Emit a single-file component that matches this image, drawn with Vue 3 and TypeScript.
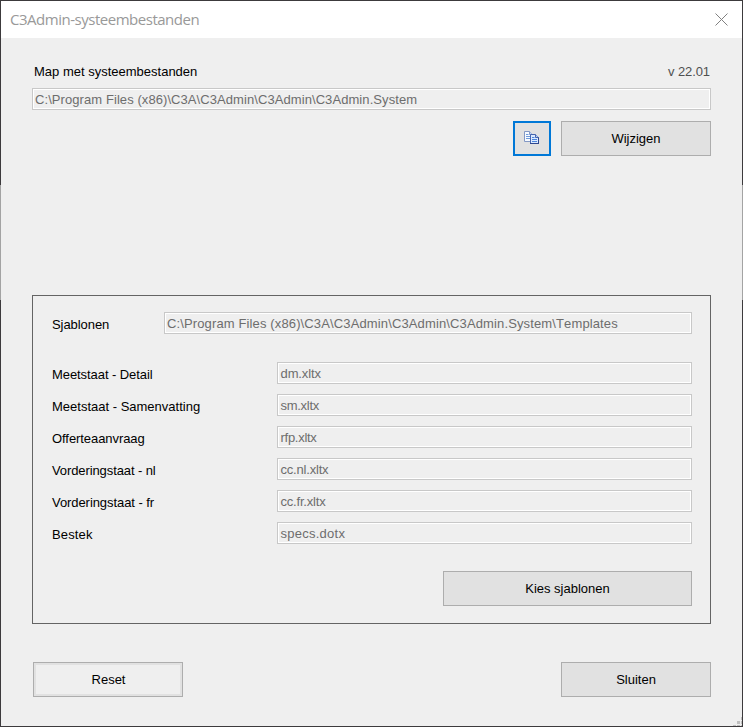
<script setup lang="ts">
interface TemplateRow {
  label: string
  file: string
  labelClass: string
  fileClass: string
}

const rows: TemplateRow[] = [
  { label: 'Meetstaat - Detail', file: 'dm.xltx', labelClass: 'l-detail', fileClass: 'f-dm' },
  { label: 'Meetstaat - Samenvatting', file: 'sm.xltx', labelClass: 'l-summary', fileClass: 'f-sm' },
  { label: 'Offerteaanvraag', file: 'rfp.xltx', labelClass: 'l-offer', fileClass: 'f-rfp' },
  { label: 'Vorderingstaat - nl', file: 'cc.nl.xltx', labelClass: 'l-nl', fileClass: 'f-nl' },
  { label: 'Vorderingstaat - fr', file: 'cc.fr.xltx', labelClass: 'l-fr', fileClass: 'f-fr' },
  { label: 'Bestek', file: 'specs.dotx', labelClass: 'l-spec', fileClass: 'f-spec' },
]
</script>

<template>
  <div class="frame">
    <div class="window">
      <header class="titlebar">
        <span class="title">C3Admin-systeembestanden</span>
        <svg class="close" width="13" height="13" viewBox="0 0 13 13">
          <path d="M0.5 0.5L12.5 12.5M12.5 0.5L0.5 12.5" stroke="#808080" stroke-width="1" fill="none" />
        </svg>
      </header>
      <main class="content">
        <div class="heading">
          <span class="l-map">Map met systeembestanden</span>
          <span class="version">v 22.01</span>
        </div>
        <div class="field"><span class="f-system">C:\Program Files (x86)\C3A\C3Admin\C3Admin\C3Admin.System</span></div>
        <div class="actions">
          <button class="btn copy" aria-label="Kopiëren">
            <svg width="16" height="14" viewBox="0 0 16 14">
              <path d="M0.5 0.5H5.5L8.5 3.5V10.5H0.5Z" fill="#f8fbff" stroke="#8398c4" />
              <path d="M5.5 0.5V3.5H8.5" fill="#c7d9f8" stroke="#8398c4" />
              <path d="M2 3.5H4.5M2 5.5H6M2 7.5H6" stroke="#6f9bdc" />
              <path d="M6.5 3.5H11.5L14.5 6.5V12.5H6.5Z" fill="#dceaff" stroke="#4765ae" />
              <path d="M6 12.5H15M14.5 6V13" stroke="#2f478f" />
              <path d="M11.5 3.5V6.5H14.5" fill="#b5cdf5" stroke="#4765ae" />
              <path d="M8 6.5H10.5M8 8.5H13M8 10.5H13" stroke="#4e86dc" />
            </svg>
          </button>
          <button class="btn small"><span class="b-edit">Wijzigen</span></button>
        </div>
        <section class="group">
          <div class="row first">
            <span class="label"><span class="l-tpl">Sjablonen</span></span>
            <div class="field"><span class="f-tpl">C:\Program Files (x86)\C3A\C3Admin\C3Admin\C3Admin.System\Templates</span></div>
          </div>
          <div class="rows">
            <div v-for="row in rows" :key="row.file" class="row">
              <span class="label"><span :class="row.labelClass">{{ row.label }}</span></span>
              <div class="field"><span :class="row.fileClass">{{ row.file }}</span></div>
            </div>
          </div>
          <button class="btn choose"><span class="b-choose">Kies sjablonen</span></button>
        </section>
        <footer class="footer">
          <button class="btn small reset"><span class="b-reset">Reset</span></button>
          <button class="btn small"><span class="b-close">Sluiten</span></button>
        </footer>
      </main>
      <svg class="grip" width="9" height="9" viewBox="0 0 9 9" fill="#bfbfbf">
        <path d="M8 0h1v3h-1zM4 4h3v3h-3zM8 4h1v3h-1zM0 8h3v1h-3zM4 8h3v1h-3zM8 8h1v1h-1z" />
      </svg>
    </div>
  </div>
</template>

<style>
body {
  margin: 0;
  overflow: hidden;
}
</style>

<style scoped>
.frame {
  box-sizing: border-box;
  width: 743px;
  height: 727px;
  padding: 1px;
  background: linear-gradient(#3c3a3c 0 185px, #a3a3a3 185px 300px, #3c3a3c 300px);
  font: 13px/16px "Liberation Sans", Arial, sans-serif;
  color: #000;
}
.window {
  position: relative;
  height: 725px;
  background: #efefef;
}
.titlebar {
  display: flex;
  justify-content: space-between;
  box-sizing: border-box;
  height: 37px;
  padding: 8px 14px 0 9px;
  background: #fff;
}
.title {
  font: 15px/21px "Open Sans", "Noto Sans", sans-serif;
  letter-spacing: -0.48px;
  color: #999;
  white-space: nowrap;
}
.close {
  margin-top: 4px;
}
.content {
  padding: 26px 31px 0;
}
.heading {
  display: flex;
  justify-content: space-between;
  height: 24px;
  padding: 0 1px 0 2px;
}
.version {
  letter-spacing: -0.1px;
  color: #505050;
}
.field {
  box-sizing: border-box;
  flex: 1;
  height: 22px;
  padding: 2px 2px 0;
  border: 1px solid #c8c8c8;
  box-shadow: inset 0 0 0 1px #fff;
  line-height: 18px;
  color: #6d6d6d;
}
.rows .field {
  padding-left: 2.5px;
}
.heading span,
.field span,
.label span,
.btn span {
  display: inline-block;
  white-space: nowrap;
}
.f-system {
  letter-spacing: 0.075px;
}
.f-tpl {
  font-kerning: none;
  letter-spacing: 0.13px;
}
.l-tpl,
.l-detail,
.l-offer,
.l-fr {
  letter-spacing: -0.07px;
}
.l-nl {
  letter-spacing: -0.1px;
}
.l-spec {
  letter-spacing: 0.15px;
}
.f-dm {
  letter-spacing: -0.1px;
}
.f-sm,
.f-rfp {
  letter-spacing: -0.28px;
}
.f-nl,
.f-fr {
  letter-spacing: -0.2px;
}
.f-spec {
  letter-spacing: 0.25px;
}
.b-reset {
  padding-left: 1px;
}
.actions {
  display: flex;
  justify-content: flex-end;
  gap: 10px;
  padding-top: 11px;
}
.btn {
  display: flex;
  align-items: center;
  justify-content: center;
  box-sizing: border-box;
  height: 35px;
  margin: 0;
  padding: 0;
  border: 1px solid #adadad;
  border-radius: 0;
  background: #e1e1e1;
  font: inherit;
  color: #000;
}
.small {
  width: 150px;
}
.copy {
  width: 38px;
  padding-bottom: 1px;
  border: 2px solid #0078d7;
}
.reset {
  background: #efefef;
  box-shadow: inset 0 0 0 2px #e1e1e1;
}
.group {
  box-sizing: border-box;
  height: 329px;
  margin-top: 139px;
  padding: 16px 18px 0 19px;
  border: 1px solid #646464;
}
.row {
  display: flex;
}
.label {
  box-sizing: border-box;
  width: 225px;
  height: 22px;
  padding-top: 5px;
}
.first .label {
  width: 112px;
}
.rows {
  display: grid;
  gap: 10px;
  margin-top: 28px;
}
.choose {
  width: 249px;
  margin: 27px 0 0 auto;
}
.footer {
  display: flex;
  justify-content: space-between;
  padding: 38px 0 0 1px;
}
.grip {
  position: absolute;
  right: 0;
  bottom: 0;
}
</style>
